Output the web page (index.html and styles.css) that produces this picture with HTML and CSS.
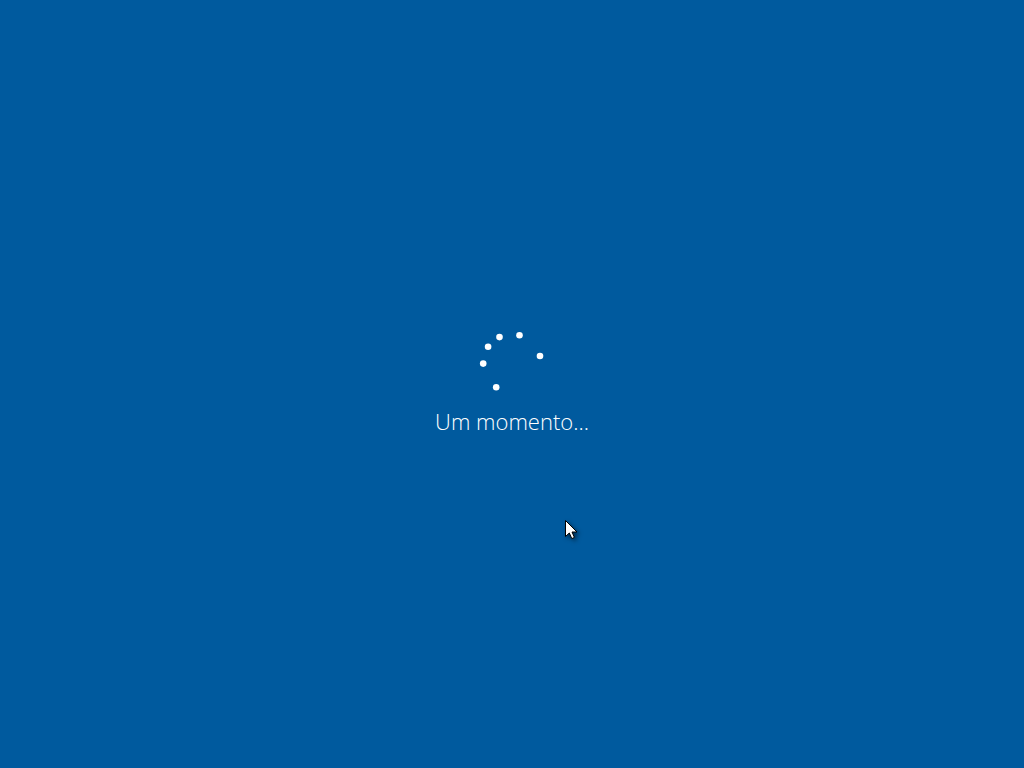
FILE: index.html
```html
<!DOCTYPE html>
<html lang="pt">
<head>
    <meta charset="UTF-8">
    <meta name="viewport" content="width=device-width, initial-scale=1.0">
    <title>Um momento...</title>
    <link rel="stylesheet" href="styles.css">
</head>
<body>
    <main class="loading" role="status">
        <svg class="spinner" viewBox="0 0 64 64" aria-hidden="true">
            <circle cx="3.2" cy="32.6" r="3.3"/>
            <circle cx="8.1" cy="15.7" r="3.3"/>
            <circle cx="19.5" cy="6.1" r="3.3"/>
            <circle cx="39.5" cy="4.2" r="3.3"/>
            <circle cx="60" cy="25" r="3.3"/>
            <circle cx="16.2" cy="56.2" r="3.3"/>
        </svg>
        <p class="message">Um momento...</p>
    </main>

    <svg class="cursor" viewBox="0 0 14 21" aria-hidden="true">
        <path d="M0.5 0.5 V16.5 L4.3 13 L6.8 18.6 L9.4 17.4 L7 12 H12 Z"/>
    </svg>
</body>
</html>
```

FILE: styles.css
```css
* {
    margin: 0;
    padding: 0;
    box-sizing: border-box;
}

body {
    min-height: 100vh;
    display: flex;
    background-color: #005a9e;
    color: #fff;
    font-family: "Segoe UI", "Open Sans", sans-serif;
}

.loading {
    flex: 1;
    display: flex;
    flex-direction: column;
    align-items: center;
    justify-content: center;
    gap: 12px;
}

.spinner {
    width: 64px;
    height: 64px;
    overflow: visible;
    fill: #fff;
}

.message {
    padding-bottom: 2px;
    font-size: 22px;
    font-weight: 350;
    line-height: 28px;
}

/* mouse pointer over the screen */
.cursor {
    position: absolute;
    left: 565px;
    top: 520px;
    width: 14px;
    height: 21px;
    overflow: visible;
    fill: #fff;
    stroke: #000;
    stroke-width: 1;
    filter: drop-shadow(2px 2px 2px rgba(0, 0, 0, 0.5));
}
```
